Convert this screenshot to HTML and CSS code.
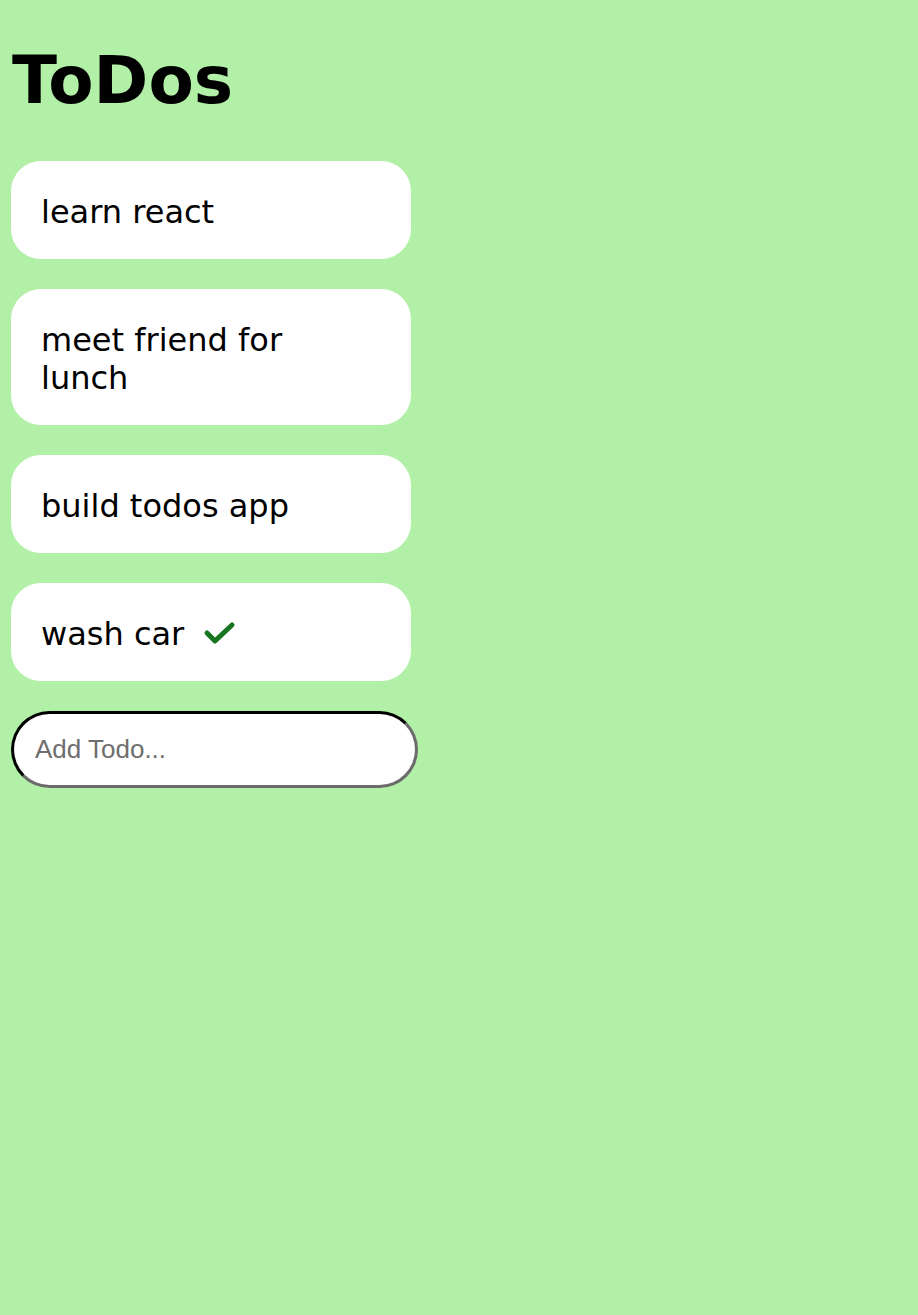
FILE: index.html
```html
<!DOCTYPE html>
<html>
<head>
<meta charset="utf-8">
<title>ToDos</title>
<link rel="stylesheet" href="styles.css">
</head>
<body>
<div class="app">
  <h1 class="title">ToDos</h1>
  <ul class="todos">
    <li class="todo">learn react</li>
    <li class="todo">meet friend for lunch</li>
    <li class="todo">build todos app</li>
    <li class="todo">wash car<svg class="check" width="34" height="26" viewBox="0 0 34 26"><polyline points="5,13 13,21 30,5" fill="none" stroke="#17761f" stroke-width="5" stroke-linecap="round" stroke-linejoin="round"/></svg></li>
  </ul>
  <input class="add" type="text" placeholder="Add Todo...">
</div>
</body>
</html>
```
FILE: styles.css
```css
html, body {
  margin: 0;
  padding: 0;
  background: #b2f0a8;
  min-height: 100%;
}
body {
  font-family: "DejaVu Sans", Verdana, sans-serif;
}
.app {
  padding: 43px 11px 0;
}
.title {
  margin: 0 0 43px 1px;
  font-size: 66px;
  line-height: 75px;
  font-weight: bold;
  color: #000;
}
.todos {
  list-style: none;
  margin: 0;
  padding: 0;
  display: flex;
  flex-direction: column;
  gap: 30px;
}
.todo {
  box-sizing: border-box;
  width: 400px;
  background: #fff;
  border-radius: 30px;
  padding: 32px 60px 28px 30px;
  font-size: 32px;
  line-height: 38px;
  color: #000;
}
.check {
  vertical-align: -1px;
  margin-left: 18px;
}
.add {
  display: block;
  box-sizing: border-box;
  margin-top: 30px;
  width: 407px;
  height: 77px;
  border: 3px inset #6b6b6b;
  border-top-color: #1a1a1a;
  border-left-color: #1a1a1a;
  border-radius: 39px;
  padding: 0 20px 0 21px;
  font-family: "Liberation Sans", Arial, sans-serif;
  font-size: 26px;
  background: #fff;
  outline: none;
}
.add::placeholder {
  color: #6e6e6e;
}
```
